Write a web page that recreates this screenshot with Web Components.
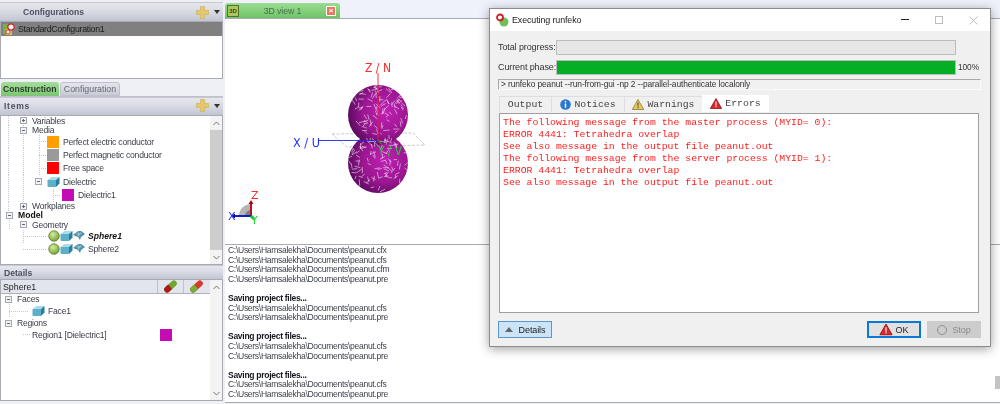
<!DOCTYPE html>
<html><head><meta charset="utf-8">
<style>
html,body{margin:0;padding:0;width:1000px;height:404px;overflow:hidden;background:#eef0f6;font-family:"Liberation Sans",Arial,sans-serif}
</style></head><body>
<fe-app></fe-app>
<script>
const SYM={
plus:`<svg width="13" height="13" viewBox="0 0 13 13"><path d="M4.5 0.5h4v4h4v4h-4v4h-4v-4h-4v-4h4z" fill="#e6c76c" stroke="#cfae50" stroke-width=".6"/></svg>`,
cube:`<svg width="13" height="12" viewBox="0 0 13 12"><path d="M.5 4L4.5 1H12.5L9 4z" fill="#a8dcea"/><path d="M.5 4H9V11H1.5Q.5 11 .5 10z" fill="#5cb0ca"/><path d="M9 4L12.5 1V7.5L9 11z" fill="#2c7c9c"/></svg>`,
ball:`<svg width="12" height="12" viewBox="0 0 12 12"><defs><radialGradient id="g" cx=".4" cy=".35" r=".7"><stop offset="0" stop-color="#d6eda0"/><stop offset="1" stop-color="#6f9d2c"/></radialGradient></defs><circle cx="6" cy="6" r="5.3" fill="url(#g)" stroke="#55772a" stroke-width=".7"/></svg>`,
cfg:`<svg width="12" height="12" viewBox="0 0 12 12"><path d="M0 1h7v10H0z" fill="#7fae3c"/><path d="M3 6h6v6H3z" fill="#d8c04c"/><circle cx="8" cy="4" r="3.2" fill="#f4f0ee" stroke="#c8232c" stroke-width="1.2"/><circle cx="5" cy="9" r="2" fill="#f4f0ee" stroke="#c8232c" stroke-width=".8"/></svg>`,
mesh:`<svg width="12" height="10" viewBox="0 0 12 10"><path d="M0 4L5 0h3l4 3-4 3-1 3-2-3z" fill="#4b8ca6"/><path d="M3 3h6M5 0l1 6M8 1L5 5" stroke="#bfe0ea" stroke-width=".6"/></svg>`,
pillg:`<svg width="15" height="13" viewBox="0 0 15 13"><g transform="rotate(-42 7.5 6.5)"><rect x="0" y="3.5" width="15" height="6" rx="3" fill="#6da82c"/><path d="M3 3.5h4v6H3a3 3 0 010-6z" fill="#b01818"/></g></svg>`,
pillr:`<svg width="15" height="13" viewBox="0 0 15 13"><g transform="rotate(-42 7.5 6.5)"><rect x="0" y="3.5" width="15" height="6" rx="3" fill="#d8392c"/><path d="M3 3.5h4v6H3a3 3 0 010-6z" fill="#78ad3c"/></g></svg>`,
warn:`<svg width="12" height="11" viewBox="0 0 12 11"><path d="M6 .5L11.7 10.5H.3z" fill="#e8c95a" stroke="#8d7a32" stroke-width=".8"/><path d="M5.5 3.5h1v4h-1zM5.5 8h1v1.2h-1z" fill="#444"/></svg>`,
err:`<svg width="12" height="11" viewBox="0 0 12 11"><path d="M6 .5L11.7 10.5H.3z" fill="#d8262c" stroke="#8f1a1e" stroke-width=".8"/><path d="M5.5 3.5h1v4h-1zM5.5 8h1v1.2h-1z" fill="#fff"/></svg>`,
info:`<svg width="11" height="11" viewBox="0 0 11 11"><circle cx="5.5" cy="5.5" r="5.3" fill="#2c78d0"/><path d="M4.8 2h1.4v1.4H4.8zM4.8 4.4h1.4v4.4H4.8z" fill="#fff"/></svg>`
};
function def(name,css,html,init){
  customElements.define(name,class extends HTMLElement{
    constructor(){super();this.attachShadow({mode:'open'}).innerHTML=`<style>${css}</style>${html}`;}
    connectedCallback(){if(init)init.call(this,this.shadowRoot);}
  });
}
def('fe-ico',':host{display:inline-flex;align-items:center;justify-content:center;flex:none}','<span id="s" style="display:flex"></span>',function(r){
  r.getElementById('s').innerHTML=SYM[this.getAttribute('n')];});
def('fe-swatch',':host{display:block;flex:none;width:12px;height:12px;background:var(--c);margin-right:2px}','');
def('fe-head',`:host{display:flex;align-items:center;height:var(--h,16px);flex:none;background:linear-gradient(#e6e7ee,#d9dbe4 45%,#c2c5d1);font:bold 8.6px "Liberation Sans",sans-serif;color:#4c5060;padding:0 0 var(--pb,0) var(--pl,5px);border-top:1px solid #c6c8d2;box-sizing:border-box}
.sp{flex:1}.a{width:0;height:0;border:3px solid transparent;border-top:4px solid #333;border-bottom:0;margin:0 3px 0 5px}.add{display:flex}`,
`<slot></slot><span class="sp"></span><span class="add" id="add"></span><span class="a" id="ar"></span>`,
function(r){ if(this.hasAttribute('add')){r.getElementById('add').innerHTML=SYM.plus;}else{r.getElementById('ar').style.display='none';}});
def('fe-row',`:host{display:flex;align-items:center;gap:2px;height:var(--rh,10px);font:8.6px "Liberation Sans",sans-serif;letter-spacing:-.23px;color:#3a3d48;white-space:nowrap;background-repeat:no-repeat}
#b{width:7px;height:7px;border:1px solid #a4a8b2;box-sizing:border-box;background:#f2f3f6;position:relative;flex:none;margin-right:3px;display:none}
#b::before{content:"";position:absolute;left:1px;right:1px;top:2px;height:1px;background:#666}
#b.p::after{content:"";position:absolute;top:1px;bottom:1px;left:2px;width:1px;background:#666}
::slotted(b){color:#111;letter-spacing:0}::slotted(i){color:#111;font-weight:bold;letter-spacing:0}`,
`<span id="b"></span><slot></slot>`,
function(r){
  const ind=+this.getAttribute('i')||0;this.style.paddingLeft=ind+'px';
  const t=this.getAttribute('t');if(t){const b=r.getElementById('b');b.style.display='block';if(t=='p')b.classList.add('p');}
  const h=this.getAttribute('rh');if(h)this.style.setProperty('--rh',h+'px');
  if(this.hasAttribute('tight'))this.style.gap='0';
  const imgs=[],pos=[],sz=[];
  (this.getAttribute('g')||'').split(',').filter(Boolean).forEach(x=>{imgs.push('repeating-linear-gradient(#c6c8cf 0 1px,transparent 1px 2px)');pos.push(x+'px 0');sz.push('1px 100%');});
  const s=this.getAttribute('s');if(s){const[x,w]=s.split(':');imgs.push('repeating-linear-gradient(90deg,#c6c8cf 0 1px,transparent 1px 2px)');pos.push(x+'px 50%');sz.push(w+'px 1px');}
  if(imgs.length){this.style.backgroundImage=imgs.join(',');this.style.backgroundPosition=pos.join(',');this.style.backgroundSize=sz.join(',');}
});
def('fe-vbar',`:host{display:flex;flex-direction:column;width:12px;flex:none;background:#f3f3f3;align-items:center;font-size:0}
.t{flex:none;height:14px;width:100%;display:flex;align-items:center;justify-content:center}
.m{flex:1;width:100%;background:var(--th,#cdcdcd)}
svg{display:block}`,
`<div class="t"><svg width="7" height="5"><path d="M.5 4L3.5 1l3 3" fill="none" stroke="#777" stroke-width="1"/></svg></div><div class="m"></div><div class="t"><svg width="7" height="5"><path d="M.5 1l3 3 3-3" fill="none" stroke="#777" stroke-width="1"/></svg></div>`);
def('fe-left',`:host{display:flex;flex-direction:column;width:224px;flex:none;padding:2px 1px 0 0;box-sizing:border-box;height:404px}
.box{background:#fff;border:1px solid #a9abb3;box-sizing:border-box}
.conf{height:58px;flex:none}
.sel{display:flex;align-items:center;gap:3px;height:14px;background:#808080;color:#1a1a1a;font:8.8px "Liberation Sans",sans-serif;letter-spacing:-.3px;padding-left:2px}
.tabs{display:flex;margin-top:3px;height:15px;flex:none;padding-left:1px;gap:1px;border-bottom:1px solid #c0c2cb;box-sizing:border-box}
.tab{font:bold 8.6px "Liberation Sans",sans-serif;height:14px;line-height:14px;padding:0 2px;border-radius:3px 3px 0 0;box-sizing:border-box}
.on{background:linear-gradient(#a4dc9a,#7cc574);color:#2b3d2d;width:58px}
.off{background:linear-gradient(#e4e5ec,#c9cbd5);color:#676a75;font-weight:normal;width:60px;text-align:center;border:1px solid #c0c2cb;font-size:8.8px;line-height:12px}
.tree{height:150px;flex:none;display:flex;padding-top:0}
.tl{flex:1;min-width:0}
.fill{flex:1;min-height:0;display:flex;flex-direction:column}
.dt{display:flex;height:14px;background:#e2e5ee;border-bottom:1px solid #b0b2ba;box-sizing:border-box;font:8.8px "Liberation Sans",sans-serif;color:#222;align-items:center}
.dt span{flex:none;height:100%;display:flex;align-items:center;justify-content:center;border-left:1px solid #c0c2ca;width:26px;box-sizing:border-box}
.dt b{font-weight:normal;flex:none;width:156px;padding-left:2px;box-sizing:border-box}
.det{display:flex;flex:1;min-height:0}
.dl{flex:1;min-width:0}`,
`<fe-head add style="--h:19px;--pl:23px"><slot name="a">Configurations</slot></fe-head>
<div class="box conf"><div class="sel"><fe-ico n="cfg"></fe-ico>StandardConfiguration1</div></div>
<div class="tabs"><div class="tab on">Construction</div><div class="tab off">Configuration</div></div>
<fe-head add style="--h:18px;--pl:4px;--pb:2px;letter-spacing:.7px">Items</fe-head>
<div class="box tree"><div class="tl">
<fe-row i="19" t="p" g="7" rh="9">Variables</fe-row>
<fe-row i="19" t="m" g="7,22" rh="10">Media</fe-row>
<fe-row i="46" g="7,22,38" s="38:8" rh="13.4"><fe-swatch style="--c:#ff9e00"></fe-swatch>Perfect electric conductor</fe-row>
<fe-row i="46" g="7,22,38" s="38:8" rh="13.4"><fe-swatch style="--c:#9a9a9a"></fe-swatch>Perfect magnetic conductor</fe-row>
<fe-row i="46" g="7,22,38" s="38:8" rh="13.4"><fe-swatch style="--c:#ff0000"></fe-swatch>Free space</fe-row>
<fe-row i="34" t="m" g="7,22" rh="13.4"><fe-ico n="cube"></fe-ico><span style="margin-left:1px">Dielectric</span></fe-row>
<fe-row i="61" g="7,22,52" s="52:8" rh="13.4"><fe-swatch style="--c:#c40cb4"></fe-swatch>Dielectric1</fe-row>
<fe-row i="19" t="p" g="7" rh="9">Workplanes</fe-row>
<fe-row i="5" t="m" rh="9"><b>Model</b></fe-row>
<fe-row i="19" t="m" g="8" rh="10">Geometry</fe-row>
<fe-row i="47" g="22" s="22:24" rh="13" tight><fe-ico n="ball"></fe-ico><fe-ico n="cube"></fe-ico><fe-ico n="mesh"></fe-ico><i style="margin-left:3px">Sphere1</i></fe-row>
<fe-row i="47" s="22:24" rh="13" tight><fe-ico n="ball"></fe-ico><fe-ico n="cube"></fe-ico><fe-ico n="mesh"></fe-ico><span style="margin-left:3px">Sphere2</span></fe-row>
</div><fe-vbar></fe-vbar></div>
<fe-head style="--h:14px;--pl:4px">Details</fe-head>
<div class="fill box" style="margin-bottom:3px">
<div class="det"><div class="dl">
<div class="dt"><b>Sphere1</b><span><fe-ico n="pillg"></fe-ico></span><span><fe-ico n="pillr"></fe-ico></span></div>
<fe-row i="4" t="m" g="8" rh="10">Faces</fe-row>
<fe-row i="31" g="8" s="8:20" rh="14"><fe-ico n="cube"></fe-ico><span style="margin-left:1px">Face1</span></fe-row>
<fe-row i="4" t="m" rh="10">Regions</fe-row>
<fe-row i="31" s="22:8" rh="13"><span style="width:126px;flex:none">Region1 [Dielectric1]</span><fe-swatch style="--c:#c40cb4"></fe-swatch></fe-row>
</div><fe-vbar style="--th:#f3f3f3"></fe-vbar></div></div>`);
def('fe-view3d',`:host{display:block;flex:1;min-height:0;background:#fff;position:relative;overflow:hidden}
svg{display:block}text{font-family:"DejaVu Sans",sans-serif}`,
`<svg id="v" width="775" height="225" viewBox="0 0 775 225"></svg>`,
function(r){
  const ox=225,oy=19,P=(x,y)=>[x-ox,y-oy];
  let seed=7;const rnd=()=>(seed=(seed*16807)%2147483647)/2147483647;
  let mesh='';
  [[378,115],[378,163]].forEach(([cx,cy])=>{
    for(let k=0;k<95;k++){
      const a=rnd()*6.283,d=Math.sqrt(rnd())*29.5,x=cx+d*Math.cos(a),y=cy+d*Math.sin(a);
      const b=rnd()*6.283,l=3.5+rnd()*3;let x2=x+l*Math.cos(b),y2=y+l*Math.sin(b);
      const dd=Math.hypot(x2-cx,y2-cy);if(dd>30){x2=cx+(x2-cx)*30/dd;y2=cy+(y2-cy)*30/dd;}
      mesh+=`M${(x-ox).toFixed(1)} ${(y-oy).toFixed(1)}L${(x2-ox).toFixed(1)} ${(y2-oy).toFixed(1)}`;
    }
  });
  const [c1x,c1y]=P(378,115),[c2x,c2y]=P(378,163);
  r.getElementById('v').innerHTML=`
  <defs><radialGradient id="s" cx=".62" cy=".45" r=".62"><stop offset="0" stop-color="#c020b4"/><stop offset=".6" stop-color="#9c1692"/><stop offset="1" stop-color="#5d0b62"/></radialGradient></defs>
  <path d="M107 115L188 114L200 126L122 128Z" fill="none" stroke="#bdbdbd" stroke-dasharray="3 1.5" stroke-width=".8"/>
  <circle cx="${c2x}" cy="${c2y}" r="30" fill="url(#s)"/><circle cx="${c1x}" cy="${c1y}" r="30" fill="url(#s)"/>
  <path d="${mesh}" stroke="#f0e6f0" stroke-width=".7" fill="none" opacity=".85"/>
  <path d="M153 54V122" stroke="#f01c30" stroke-width=".9"/>
  <path d="M93 121.5H153" stroke="#1c28f0" stroke-width=".9"/>
  <path d="M153 121.5l4 4" stroke="#19d42c" stroke-width="1"/>
  <text x="153" y="53" text-anchor="middle" font-size="13" fill="#ff2a2a" textLength="26" lengthAdjust="spacingAndGlyphs">Z / N</text>
  <text x="68" y="128" font-size="13" fill="#2430ff" textLength="27" lengthAdjust="spacingAndGlyphs">X / U</text>
  <text x="153" y="136" font-size="13" fill="#19d42c" textLength="24" lengthAdjust="spacingAndGlyphs">Y / V</text>
  <path d="M14 197a12 12 0 0 1 12-12v12z" fill="#b4b4b4"/>
  <path d="M20 197a6 6 0 0 1 6-6v6z" fill="#7e7e7e"/>
  <path d="M26 183V197" stroke="#c01020" stroke-width="2"/><path d="M23.5 185L26 181l2.5 4z" fill="#901020"/>
  <path d="M9 197H26" stroke="#1020c0" stroke-width="2"/><path d="M10 194.5L6 197l4 2.5z" fill="#101080"/>
  <path d="M26 197l3 3" stroke="#10c020" stroke-width="3"/>
  <text x="26" y="180" font-size="11" fill="#ff2a2a">Z</text>
  <text x="3" y="201" font-size="11" fill="#2430ff">X</text>
  <text x="26" y="205" font-size="11" fill="#19d42c">Y</text>`;
});
def('fe-log',`:host{display:block;height:159px;flex:none;background:#fff;border-top:1px solid #a8aab2;border-bottom:1px solid #a8aab2;box-sizing:border-box;padding:1px 0 0 3px;font:8.55px/9.6px "Liberation Sans",sans-serif;letter-spacing:-.3px;color:#3b3e4a;white-space:pre;overflow:hidden}`,`<slot></slot>`);
def('fe-right',`:host{display:flex;flex-direction:column;flex:1;min-width:0;height:404px;box-sizing:border-box;padding-bottom:1px;margin-left:1px}
.tb{height:19px;flex:none;background:#eff2fb;border-bottom:1px solid #a9abb3;box-sizing:border-box;padding-top:3px;display:flex}
.t{width:115px;height:15px;background:linear-gradient(#9bdc92,#6ec566);border-radius:3px 3px 0 0;display:flex;align-items:center;font:8.8px "Liberation Sans",sans-serif;letter-spacing:-.1px;color:#4d6b52;box-sizing:border-box;padding:0 4px 0 2px}
.i{width:12px;height:12px;background:#a8c85c;border:1px solid #55702c;box-sizing:border-box;font:bold 6px "Liberation Sans",sans-serif;color:#33461c;display:flex;align-items:center;justify-content:center}
.l{flex:1;text-align:center}
.x{width:10px;height:10px;background:#e8785c;border:1px solid #fff;box-sizing:border-box;color:#fff;font:bold 8px/8px "Liberation Sans",sans-serif;text-align:center}
.sb{position:absolute;right:0;top:376px;width:5px;height:13px;background:#c4c4c4}`,
`<div class="tb"><div class="t"><span class="i">3D</span><span class="l">3D view 1</span><span class="x">×</span></div></div><fe-view3d></fe-view3d><slot></slot><div class="sb"></div>`);
def('fe-btn',`:host{display:flex;align-items:center;justify-content:center;gap:2px;width:54px;height:17px;box-sizing:border-box;font:9px "Liberation Sans",sans-serif;color:#222;background:#e1e1e1;border:1px solid #adadad}
:host([k=det]){background:#cce4f7;border:1px solid #5c97cc}
:host([k=ok]){border:2px solid #0a78d6}
:host([k=stop]){color:#8c8c8c;background:#cccccc;border-color:#cccccc}`,`<slot></slot>`);
def('fe-dialog',`:host{position:absolute;left:489px;top:8px;width:502px;height:339px;background:#f0f0f0;border:1px solid #8c8c8c;box-sizing:border-box;box-shadow:0 2px 10px rgba(0,0,0,.38);display:flex;flex-direction:column;font:9px "Liberation Sans",sans-serif;letter-spacing:-.1px;color:#333}
.title{height:22px;background:#fff;flex:none;display:flex;align-items:center;padding-left:6px;gap:3px;color:#222;font-size:8.9px}
.sp{flex:1}.ct{display:flex;align-items:center;justify-content:center;width:34px;margin-left:-3px}
.body{flex:1;display:flex;flex-direction:column;padding:9px 0 0 8px;min-height:0}
.pr{display:flex;align-items:center;height:14px;margin-bottom:6px;flex:none}
.pr span{width:58px;flex:none;color:#333;white-space:nowrap}
.bar{width:400px;height:15px;background:#e6e6e6;border:1px solid #bcbcbc;box-sizing:border-box}
.bar.g{background:#06ae26}
.pct{margin-left:2px;font-size:8.4px;width:auto!important}
.cmd{height:11px;width:483px;box-sizing:border-box;background:#f1f1f1;border-top:1px solid #a8a8a8;border-left:1px solid #a8a8a8;border-bottom:1px solid #fafafa;border-right:1px solid #fafafa;font-size:8.4px;line-height:9px;padding-left:2px;flex:none;color:#333;white-space:nowrap}
.tabs{display:flex;margin-top:5px;height:17px;flex:none;padding-left:1px;font:9.8px "Liberation Mono",monospace;letter-spacing:0;color:#444}
.tab{display:flex;align-items:center;justify-content:center;gap:3px;height:16px;margin-top:1px;background:#f0f0f0;border:1px solid #dedede;border-bottom:0;box-sizing:border-box;margin-right:-1px}
.tab.on{background:#fff;height:17px;margin-top:0;border:0;margin-right:0}
.txt{width:480px;height:200px;margin:1px 0 0 1px;flex:none;background:#fff;border:1px solid #9f9f9f;box-sizing:border-box;padding:3px 0 0 3px;font:9.8px/12px "Liberation Mono",monospace;letter-spacing:0;color:#ff1c1c;white-space:pre}
.btns{display:flex;align-items:center;margin-top:8px;flex:none;padding-right:9px}
.gap{flex:1}
.tri{width:0;height:0;border:4px solid transparent;border-bottom:5px solid #666;border-top:0;margin-right:4px}
.stop{width:10px;height:10px;border:1.5px solid #909090;border-radius:50%;box-sizing:border-box;margin-right:3px}`,
`<div class="title"><svg width="13" height="14" viewBox="0 0 13 14"><circle cx="8" cy="9" r="4.5" fill="#6fbf5a"/><circle cx="4" cy="4.5" r="3" fill="none" stroke="#c8232c" stroke-width="1.8"/></svg><span>Executing runfeko</span><span class="sp"></span>
<span class="ct"><svg width="8" height="2"><path d="M0 .5h8" stroke="#222"/></svg></span><span class="ct"><svg width="8" height="8"><rect x=".5" y=".5" width="7" height="7" fill="none" stroke="#bdbdbd"/></svg></span><span class="ct"><svg width="9" height="9"><path d="M.5.5l8 8M8.5.5l-8 8" stroke="#bdbdbd"/></svg></span></div>
<div class="body">
<div class="pr"><span>Total progress:</span><div class="bar"></div></div>
<div class="pr" style="margin-bottom:5px"><span>Current phase:</span><div class="bar g"></div><span class="pct">100%</span></div>
<div class="cmd">&gt; runfeko peanut --run-from-gui -np 2 --parallel-authenticate localonly</div>
<div class="tabs"><div class="tab" style="width:53px">Output</div><div class="tab" style="width:74px"><fe-ico n="info"></fe-ico>Notices</div><div class="tab" style="width:79px"><fe-ico n="warn"></fe-ico>Warnings</div><div class="tab on" style="width:67px"><fe-ico n="err"></fe-ico>Errors</div></div>
<div class="txt">The following message from the master process (MYID= 0):
ERROR 4441: Tetrahedra overlap
See also message in the output file peanut.out
The following message from the server process (MYID= 1):
ERROR 4441: Tetrahedra overlap
See also message in the output file peanut.out</div>
<div class="btns"><fe-btn k="det"><span class="tri"></span>Details</fe-btn><span class="gap"></span><fe-btn k="ok"><fe-ico n="err" style="transform:scale(1.1);margin-right:2px"></fe-ico>OK</fe-btn><span style="width:6px"></span><fe-btn k="stop"><span class="stop"></span>Stop</fe-btn></div>
</div>`);
def('fe-app',`:host{display:flex;width:1000px;height:404px;position:relative;background:#eef0f6;filter:blur(.35px)}`,
`<fe-left></fe-left><fe-right><fe-log><span>C:\\Users\\Hamsalekha\\Documents\\peanut.cfx
C:\\Users\\Hamsalekha\\Documents\\peanut.cfs
C:\\Users\\Hamsalekha\\Documents\\peanut.cfm
C:\\Users\\Hamsalekha\\Documents\\peanut.pre

<b style="color:#15171f">Saving project files...</b>
C:\\Users\\Hamsalekha\\Documents\\peanut.cfs
C:\\Users\\Hamsalekha\\Documents\\peanut.pre

<b style="color:#15171f">Saving project files...</b>
C:\\Users\\Hamsalekha\\Documents\\peanut.cfs
C:\\Users\\Hamsalekha\\Documents\\peanut.pre

<b style="color:#15171f">Saving project files...</b>
C:\\Users\\Hamsalekha\\Documents\\peanut.cfs
C:\\Users\\Hamsalekha\\Documents\\peanut.pre</span></fe-log></fe-right><fe-dialog></fe-dialog>`);
</script>
</body></html>
